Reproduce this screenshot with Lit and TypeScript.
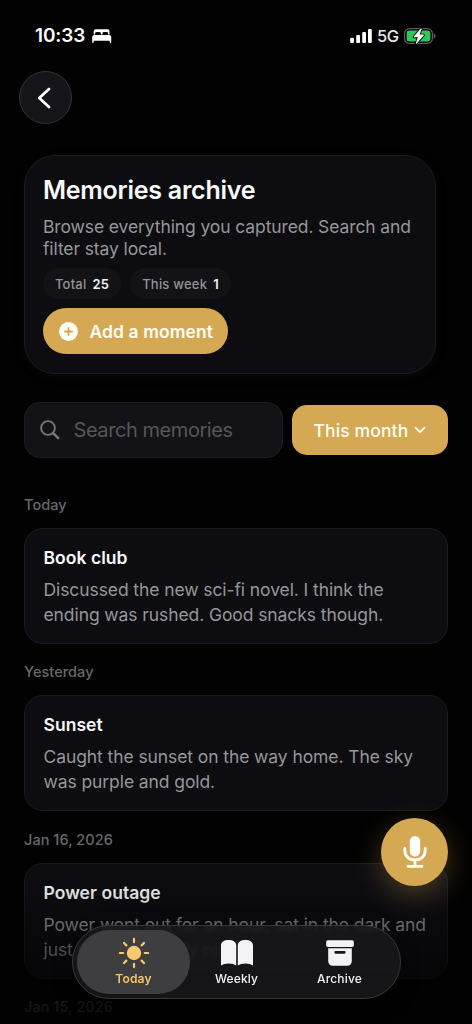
import { LitElement, html, css, svg } from "lit";
import { customElement, property, state } from "lit/decorators.js";

const base = css`
  :host { display: block; box-sizing: border-box; }
  *, *::before, *::after { box-sizing: border-box; }
  svg { display: block; flex: none; }
  button { font: inherit; border: 0; padding: 0; margin: 0; background: none; color: inherit; letter-spacing: inherit; }
`;

@customElement("status-bar")
class StatusBar extends LitElement {
  static styles = [base, css`
    :host { height: 71px; padding: 24px 36px 0 35px; }
    .row { display: flex; align-items: center; height: 23px; color: #fff; }
    .time { font-size: 19px; font-weight: 600; letter-spacing: -0.1px; width: 57px; white-space: nowrap; }
    .grow { flex: 1; }
    .net { font-size: 16.5px; font-weight: 500; letter-spacing: -0.4px; width: 27px; margin-left: 5px; color: #e6e6e8; }
  `];
  render() {
    return html`<div class="row">
      <span class="time">10:33</span>
      <svg width="20" height="14" viewBox="0 0 20 14" fill="#fff">
        <path d="M1.7 5.6V2.2A1.9 1.9 0 0 1 3.6.3h12a1.9 1.9 0 0 1 1.9 1.9v3.400h-1.400V4.300A1.300 1.300 0 0 0 14.800 3h-3a1.300 1.300 0 0 0-1.300 1.300v1.300H8.800V4.300A1.300 1.300 0 0 0 7.500 3h-3a1.300 1.300 0 0 0-1.300 1.300v1.300z"/>
        <path d="M.2 13.200V8a1.900 1.900 0 0 1 1.900-1.900h15.200A1.900 1.900 0 0 1 19.200 8v5.200a.75.75 0 0 1-1.500 0v-1.400H1.700v1.400a.75.75 0 0 1-1.500 0z"/>
      </svg>
      <span class="grow"></span>
      <svg width="22" height="14" viewBox="0 0 22 14" fill="#fff">
        <rect x=".2" y="8.800" width="3.800" height="5.200" rx="1.100"/><rect x="6.200" y="6" width="3.800" height="8" rx="1.100"/>
        <rect x="12.200" y="3" width="3.800" height="11" rx="1.100"/><rect x="18" y="0" width="3.800" height="14" rx="1.100"/>
      </svg>
      <span class="net">5G</span>
      <svg width="32" height="16" viewBox="0 0 32 16">
        <rect x=".6" y=".6" width="27.800" height="14.800" rx="5" fill="none" stroke="#5c5c60" stroke-width="1.200"/>
        <rect x="2.600" y="2.600" width="23.800" height="10.800" rx="3.200" fill="#30c758"/>
        <path d="M29.700 5.500c1.200.4 1.900 1.400 1.900 2.500s-.7 2.100-1.900 2.500z" fill="#5c5c60"/>
        <path d="M16.700.4 9.800 8.500c-.3.400-.1.800.4.800h3.700l-2 5.700c-.2.700.4 1 .9.500l6.900-8.100c.3-.4.1-.8-.4-.8h-3.700l2-5.700c.2-.7-.4-1-.9-.5z" fill="#fff" stroke="#030303" stroke-width="1.800" paint-order="stroke"/>
      </svg>
    </div>`;
  }
}

@customElement("archive-hero")
class ArchiveHero extends LitElement {
  @property({ type: Number }) total = 0;
  @property({ type: Number }) week = 0;
  static styles = [base, css`
    .card { height: 219px; width: 412px; border: 1px solid #1b1b20; border-radius: 31px; background: #0d0c11; padding: 19px 18px 0; box-shadow: 0 3px 8px rgba(22, 22, 26, .35); }
    .title { margin: 0; font-size: 25px; line-height: 31px; font-weight: 600; color: #fafafa; letter-spacing: -0.250px; white-space: nowrap; }
    .text { margin: 10px 0 0; font-size: 17.500px; line-height: 21.500px; color: #97969b; letter-spacing: -0.110px; white-space: nowrap; }
    .chips { display: flex; gap: 9px; margin-top: 9px; }
    .chip { height: 31px; border-radius: 16px; background: #131217; display: flex; align-items: center; justify-content: center; gap: 6px; font-size: 13px; font-weight: 500; color: #949398; letter-spacing: .2px; white-space: nowrap; }
    .chip.total { width: 78px; } .chip.week { width: 101px; }
    .chip b { font-weight: 600; color: #f4f4f4; }
    .add { margin-top: 9px; width: 185px; height: 46px; border-radius: 23px; background: #d5a953; display: flex; align-items: center; padding-left: 16px; gap: 11.500px; color: #fffdf5; font-size: 17.500px; font-weight: 600; letter-spacing: .080px; white-space: nowrap; }
  `];
  render() {
    return html`<section class="card">
      <h1 class="title">Memories archive</h1>
      <p class="text">Browse everything you captured. Search and<br>filter stay local.</p>
      <div class="chips">
        <span class="chip total">Total <b>${this.total}</b></span>
        <span class="chip week">This week <b>${this.week}</b></span>
      </div>
      <button class="add">
        <svg width="19" height="19" viewBox="0 0 19 19"><circle cx="9.500" cy="9.500" r="9.400" fill="#fffdf5"/><path d="M9.500 6v7M6 9.500h7" stroke="#d5a953" stroke-width="1.800" stroke-linecap="round"/></svg>
        <span>Add a moment</span>
      </button>
    </section>`;
  }
}

@customElement("search-row")
class SearchRow extends LitElement {
  static styles = [base, css`
    .row { display: flex; align-items: center; gap: 9px; }
    .field { width: 259px; height: 56px; border-radius: 16px; border: 1px solid #1d1c21; background: #131217; display: flex; align-items: center; padding-left: 15px; gap: 13.500px; color: #56555a; font-size: 20px; letter-spacing: -0.430px; white-space: nowrap; }
    .period { width: 156px; height: 50px; border-radius: 15px; background: #d5a953; color: #fffdf5; display: flex; align-items: center; padding-left: 21.500px; gap: 6px; font-size: 17.500px; font-weight: 500; letter-spacing: .120px; white-space: nowrap; }
  `];
  render() {
    return html`<div class="row">
      <div class="field">
        <svg width="20" height="20" viewBox="0 0 20 20" fill="none" stroke="#77767b" stroke-linecap="round"><circle cx="8" cy="8" r="6.900" stroke-width="1.900"/><path d="m13.200 13.200 5 5" stroke-width="2.500"/></svg>
        <span class="hint">Search memories</span>
      </div>
      <button class="period"><span class="lbl">This month</span>
        <svg width="12" height="8" viewBox="0 0 12 8" fill="none" stroke="#fffdf5" stroke-width="1.800" stroke-linecap="round" stroke-linejoin="round"><path d="m1.400 1.600 4.600 4.600 4.600-4.600"/></svg>
      </button>
    </div>`;
  }
}

@customElement("memory-entry")
class MemoryEntry extends LitElement {
  @property() day = "";
  @property() heading = "";
  @property({ attribute: false }) lines: string[] = [];
  static styles = [base, css`
    .day { margin: 0 0 14px; font-size: 14.500px; line-height: 18px; font-weight: 500; color: #69686d; letter-spacing: .050px; white-space: nowrap; }
    .card { height: 116px; border: 1px solid #1b1b20; border-radius: 19px; background: #0d0c11; padding: 17px 18px 0 18.500px; }
    .heading { margin: 0 0 8px; font-size: 17.500px; line-height: 23px; font-weight: 600; color: #fafafa; letter-spacing: .050px; white-space: nowrap; }
    .text { margin: 0; font-size: 17.500px; line-height: 25px; color: #97969b; letter-spacing: -0.090px; white-space: nowrap; }
  `];
  render() {
    return html`<h2 class="day">${this.day}</h2>
      ${this.heading ? html`<article class="card">
        <h3 class="heading">${this.heading}</h3>
        <p class="text">${this.lines.map((l, i) => html`${i ? html`<br>` : ""}${l}`)}</p>
      </article>` : ""}`;
  }
}

@customElement("tab-bar")
class TabBar extends LitElement {
  @state() active = "Today";
  static styles = [base, css`
    .bar { width: 329px; height: 74px; border-radius: 37px; border: 1px solid #38373d; background: rgba(25, 25, 28, .86); backdrop-filter: blur(1.500px); padding: 4px; display: flex; box-shadow: 0 6px 20px rgba(0, 0, 0, .35); }
    .tab { height: 64px; width: 103px; border-radius: 32px; display: flex; flex-direction: column; align-items: center; padding-top: 7px; gap: 1px; color: #f3f3f6; font-size: 12px; line-height: 17px; font-weight: 500; letter-spacing: .150px; white-space: nowrap; }
    .tab.active { width: 113px; margin-right: -5px; background: rgba(66, 66, 69, .93); color: #f4c56c; font-weight: 600; }
  `];
  icon(name: string) {
    if (name === "Today") {
      const rays = [0, 45, 90, 135, 180, 225, 270, 315];
      return svg`<svg width="32" height="32" viewBox="0 0 32 32"><circle cx="16" cy="16" r="7.200" fill="#f9c970"/>${rays.map((a) => svg`<path d="M16 1.900v3.300" transform="rotate(${a} 16 16)" stroke="#f9c970" stroke-width="2.200" stroke-linecap="round"/>`)}</svg>`;
    }
    if (name === "Weekly") {
      return svg`<svg width="34" height="32" viewBox="0 0 34 32" fill="#f3f3f6"><path d="M1 28.600V8.500C1 5 4 3 8.700 3c4.200 0 7.500 1.900 7.500 5.300v20.300c-1.900-1.400-4.600-2.100-7.500-2.100s-5.700.8-7.700 2.100z"/><path d="M17.800 28.600V8.300C17.800 4.900 21.100 3 25.300 3 30 3 33 5 33 8.500v20.100c-2-1.300-4.800-2.100-7.700-2.100s-5.600.7-7.500 2.100z"/></svg>`;
    }
    return svg`<svg width="28" height="32" viewBox="0 0 28 32" fill="#f3f3f6"><rect x=".2" y="3.200" width="27.600" height="6.700" rx="1.700"/><path fill-rule="evenodd" d="M2.200 11.300h23.600v13a4.500 4.500 0 0 1-4.500 4.500H6.700a4.500 4.500 0 0 1-4.500-4.500zM9.700 14a1.350 1.350 0 0 0 0 2.700h8.600a1.350 1.350 0 0 0 0-2.700z"/></svg>`;
  }
  render() {
    return html`<nav class="bar">${["Today", "Weekly", "Archive"].map((n) => html`
      <button class="tab ${n === this.active ? "active" : ""}" @click=${() => (this.active = n)}>${this.icon(n)}<span>${n}</span></button>`)}</nav>`;
  }
}

@customElement("app-root")
class AppRoot extends LitElement {
  static styles = [base, css`
    :host { position: relative; width: 472px; height: 1024px; overflow: hidden; background: #020202; font-family: Inter, "Noto Sans", sans-serif; }
    .top { padding-left: 19px; height: 84px; }
    .back { width: 53px; height: 53px; border-radius: 50%; background: #151419; border: 1px solid #333237; display: grid; place-items: center; padding-right: 3px; }
    .content { padding: 0 24px; }
    .search { margin-top: 28px; }
    .list { display: grid; grid-template-columns: minmax(0, 1fr); gap: 19.500px; margin-top: 37.500px; }
    .fade { position: absolute; left: 0; right: 0; bottom: 0; height: 174px; background: linear-gradient(to bottom, rgba(2,2,2,0), rgba(2,2,2,.1) 24%, rgba(2,2,2,.3) 42%, rgba(2,2,2,.47) 57%, rgba(2,2,2,.8) 88%, rgba(2,2,2,.88)); }
    .fab { position: absolute; left: 381px; top: 818px; width: 67px; height: 68px; border-radius: 50%; background: #d5a953; display: grid; place-items: center; box-shadow: 0 9px 30px rgba(213, 169, 83, .32); }
    .tabs { position: absolute; left: 72px; top: 925px; }
  `];
  entries = [
    { day: "Today", heading: "Book club", lines: ["Discussed the new sci-fi novel. I think the", "ending was rushed. Good snacks though."] },
    { day: "Yesterday", heading: "Sunset", lines: ["Caught the sunset on the way home. The sky", "was purple and gold."] },
    { day: "Jan 16, 2026", heading: "Power outage", lines: ["Power went out for an hour, sat in the dark and", "just talked. Weirdly nice."] },
    { day: "Jan 15, 2026", heading: "", lines: [] },
  ];
  render() {
    return html`
      <status-bar></status-bar>
      <div class="top"><button class="back" aria-label="Back">
        <svg width="14" height="22" viewBox="0 0 14 22" fill="none" stroke="#fff" stroke-width="2.700" stroke-linecap="round" stroke-linejoin="round"><path d="M12 1.900 2.300 11l9.700 9.100"/></svg>
      </button></div>
      <main class="content">
        <archive-hero .total=${25} .week=${1}></archive-hero>
        <search-row class="search"></search-row>
        <div class="list">${this.entries.map((e) => html`<memory-entry .day=${e.day} .heading=${e.heading} .lines=${e.lines}></memory-entry>`)}</div>
      </main>
      <div class="fade"></div>
      <button class="fab" aria-label="Record">
        <svg width="24" height="34" viewBox="0 0 24 34"><rect x="6.800" y="1" width="10.400" height="20.500" rx="5.200" fill="#fff"/><path d="M1.800 13.500v1.800c0 6 4.300 9.700 10.200 9.700s10.200-3.700 10.200-9.700v-1.800M12 25v6M5 31.300h14" fill="none" stroke="#fff" stroke-width="2.800" stroke-linecap="round"/></svg>
      </button>
      <tab-bar class="tabs"></tab-bar>`;
  }
}
